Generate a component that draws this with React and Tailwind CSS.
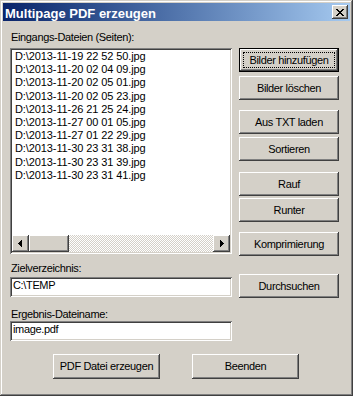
import React from "react";

const raised =
  "bg-[#d4d0c8] shadow-[inset_-1px_-1px_#404040,inset_1px_1px_#ffffff,inset_-2px_-2px_#808080,inset_2px_2px_#d4d0c8]";
const sunken =
  "bg-white shadow-[inset_1px_1px_#808080,inset_-1px_-1px_#ffffff,inset_2px_2px_#404040,inset_-2px_-2px_#d4d0c8]";

function Btn({ children, className = "" }) {
  return (
    <div className={`${raised} flex items-center justify-center leading-[13px] ${className}`}>
      {children}
    </div>
  );
}

function DefaultBtn({ children, className = "" }) {
  return (
    <div className={`border border-black ${className}`}>
      <div className={`${raised} flex h-full w-full p-[3px]`}>
        <div className="flex flex-1 items-center justify-center border border-dotted border-black leading-[13px]">
          {children}
        </div>
      </div>
    </div>
  );
}

function Pixels({ w, h, pts }) {
  return (
    <svg width={w} height={h} viewBox={`0 0 ${w} ${h}`} shapeRendering="crispEdges">
      {pts.map(([x, y, pw], i) => (
        <rect key={i} x={x} y={y} width={pw || 1} height={1} fill="#000" />
      ))}
    </svg>
  );
}

const closePts = [];
for (let i = 0; i < 7; i++) {
  closePts.push([i, i, 2]);
  closePts.push([6 - i, i, 2]);
}

const leftArrow = [
  [3, 0, 1],
  [2, 1, 2],
  [1, 2, 3],
  [0, 3, 4],
  [1, 4, 3],
  [2, 5, 2],
  [3, 6, 1],
];
const rightArrow = [
  [0, 0, 1],
  [0, 1, 2],
  [0, 2, 3],
  [0, 3, 4],
  [0, 4, 3],
  [0, 5, 2],
  [0, 6, 1],
];

const files = [
  "D:\\2013-11-19 22 52 50.jpg",
  "D:\\2013-11-20 02 04 09.jpg",
  "D:\\2013-11-20 02 05 01.jpg",
  "D:\\2013-11-20 02 05 23.jpg",
  "D:\\2013-11-26 21 25 24.jpg",
  "D:\\2013-11-27 00 01 05.jpg",
  "D:\\2013-11-27 01 22 29.jpg",
  "D:\\2013-11-30 23 31 38.jpg",
  "D:\\2013-11-30 23 31 39.jpg",
  "D:\\2013-11-30 23 31 41.jpg",
];

export default function App() {
  return (
    <div className="h-[396px] w-[353px] bg-[#d4d0c8] p-[3px] font-['Liberation_Sans',Arial,sans-serif] text-[11px] tracking-[-0.35px] text-black shadow-[inset_-1px_-1px_#404040,inset_1px_1px_#d4d0c8,inset_-2px_-2px_#808080,inset_2px_2px_#ffffff]">
      {/* Title bar */}
      <div className="flex h-[18px] items-start bg-gradient-to-r from-[#0a246a] to-[#a6caf0] pl-[2px] pr-[2px]">
        <span className="pt-[3px] text-[13px] font-bold leading-[15px] tracking-normal text-white">
          Multipage PDF erzeugen
        </span>
        <div className={`${raised} ml-auto mt-[2px] flex h-[14px] w-[16px] items-center justify-center`}>
          <Pixels w={8} h={7} pts={closePts} />
        </div>
      </div>

      {/* Body */}
      <div className="pl-[7px]">
        <div className="ml-[1px] mt-[10px] h-[13px] leading-[13px]">Eingangs-Dateien (Seiten):</div>

        <div className="mt-[4px] flex items-start">
          {/* Listbox */}
          <div className={`${sunken} flex h-[206px] w-[222px] flex-col p-[2px]`}>
            <div className="flex-1 pl-[3px] leading-[13.2px] tracking-[-0.1px]">
              {files.map((f) => (
                <div key={f}>{f}</div>
              ))}
            </div>
            <div className="flex h-[17px]">
              <div className={`${raised} flex w-[17px] items-center justify-center pr-[1px]`}>
                <Pixels w={4} h={7} pts={leftArrow} />
              </div>
              <div className={`${raised} w-[40px]`} />
              <div className="flex-1 bg-[repeating-conic-gradient(#d4d0c8_0_25%,#ffffff_0_50%)] bg-[length:2px_2px]" />
              <div className={`${raised} flex w-[17px] items-center justify-center pl-[1px]`}>
                <Pixels w={4} h={7} pts={rightArrow} />
              </div>
            </div>
          </div>

          {/* Side buttons */}
          <div className="ml-[7px] flex w-[100px] flex-col">
            <DefaultBtn className="h-[24px]">Bilder hinzufügen</DefaultBtn>
            <Btn className="mt-[4px] h-[24px]">Bilder löschen</Btn>
            <Btn className="mt-[10px] h-[24px]">Aus TXT laden</Btn>
            <Btn className="mt-[3px] h-[24px]">Sortieren</Btn>
            <Btn className="mt-[11px] h-[24px]">Rauf</Btn>
            <Btn className="mt-[2px] h-[24px]">Runter</Btn>
            <Btn className="mt-[10px] h-[24px]">Komprimierung</Btn>
          </div>
        </div>

        {/* Zielverzeichnis */}
        <div className="mt-[6px] flex items-end">
          <div className="flex w-[222px] flex-col">
            <div className="ml-[1px] h-[13px] leading-[13px]">Zielverzeichnis:</div>
            <div className={`${sunken} mt-[2px] h-[20px] px-[2px] pt-[2px] leading-[13px]`}>
              <span className="pl-[1px]">C:\TEMP</span>
            </div>
          </div>
          <Btn className="mb-[-1px] ml-[7px] h-[24px] w-[100px]">Durchsuchen</Btn>
        </div>

        {/* Ergebnis-Dateiname */}
        <div className="mt-[11px] flex w-[222px] flex-col">
          <div className="ml-[1px] h-[13px] leading-[13px]">Ergebnis-Dateiname:</div>
          <div className={`${sunken} h-[20px] px-[2px] pt-[2px] leading-[13px]`}>
            <span className="pl-[1px]">image.pdf</span>
          </div>
        </div>

        {/* Bottom buttons */}
        <div className="ml-[43px] mt-[13px] flex gap-[32px]">
          <Btn className="h-[25px] w-[107px]">PDF Datei erzeugen</Btn>
          <Btn className="h-[25px] w-[107px]">Beenden</Btn>
        </div>
      </div>
    </div>
  );
}
